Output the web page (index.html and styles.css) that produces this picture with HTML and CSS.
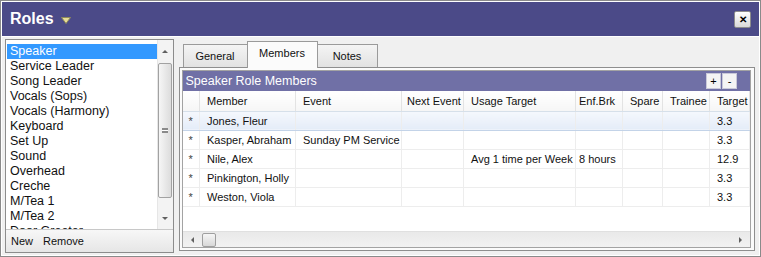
FILE: index.html
```html
<!DOCTYPE html>
<html lang="en">
<head>
    <meta charset="UTF-8">
    <title>Roles</title>
    <link rel="stylesheet" href="styles.css">
</head>
<body>
    <div class="window">
        <div class="titlebar">
            <span class="title">Roles</span>
            <svg class="title-arrow" width="10" height="7" viewBox="0 0 10 7">
                <polygon points="0.5,0.5 9.5,0.5 5,6.5" fill="#e6dc98" stroke="#8f8a5a" stroke-width="1"/>
            </svg>
            <div class="close-btn">&#x2715;</div>
        </div>

        <div class="window-body">
            <div class="roles-pane">
                <div class="role-list">
                    <ul class="role-items">
                        <li class="selected">Speaker</li>
                        <li>Service Leader</li>
                        <li>Song Leader</li>
                        <li>Vocals (Sops)</li>
                        <li>Vocals (Harmony)</li>
                        <li>Keyboard</li>
                        <li>Set Up</li>
                        <li>Sound</li>
                        <li>Overhead</li>
                        <li>Creche</li>
                        <li>M/Tea 1</li>
                        <li>M/Tea 2</li>
                        <li>Door Greeter</li>
                    </ul>
                    <div class="vscroll">
                        <span class="arrow-up"></span>
                        <div class="vthumb"><span class="grip"></span></div>
                        <span class="arrow-down"></span>
                    </div>
                </div>
                <div class="role-actions">
                    <span>New</span>
                    <span>Remove</span>
                </div>
            </div>

            <div class="details-pane">
                <div class="tabs">
                    <div class="tab tab-general">General</div>
                    <div class="tab tab-members active">Members</div>
                    <div class="tab tab-notes">Notes</div>
                </div>
                <div class="tab-panel">
                    <div class="grid">
                        <div class="grid-header">
                            <span>Speaker Role Members</span>
                            <div class="grid-tools">
                                <span class="tool-btn">+</span>
                                <span class="tool-btn">-</span>
                            </div>
                        </div>
                        <table class="members">
                            <colgroup>
                                <col style="width:17px">
                                <col style="width:96px">
                                <col style="width:106px">
                                <col style="width:62px">
                                <col style="width:112px">
                                <col style="width:47px">
                                <col style="width:40px">
                                <col style="width:47px">
                                <col style="width:40px">
                            </colgroup>
                            <thead>
                                <tr>
                                    <th></th>
                                    <th>Member</th>
                                    <th>Event</th>
                                    <th class="tight">Next Event</th>
                                    <th>Usage Target</th>
                                    <th class="narrow">Enf.Brk</th>
                                    <th>Spare</th>
                                    <th>Trainee</th>
                                    <th>Target</th>
                                </tr>
                            </thead>
                            <tbody>
                                <tr class="current">
                                    <td class="star">*</td><td>Jones, Fleur</td><td></td><td></td><td></td><td></td><td></td><td></td><td>3.3</td>
                                </tr>
                                <tr>
                                    <td class="star">*</td><td>Kasper, Abraham</td><td>Sunday PM Service</td><td></td><td></td><td></td><td></td><td></td><td>3.3</td>
                                </tr>
                                <tr>
                                    <td class="star">*</td><td>Nile, Alex</td><td></td><td></td><td>Avg 1 time per Week</td><td class="narrow">8 hours</td><td></td><td></td><td>12.9</td>
                                </tr>
                                <tr>
                                    <td class="star">*</td><td>Pinkington, Holly</td><td></td><td></td><td></td><td></td><td></td><td></td><td>3.3</td>
                                </tr>
                                <tr>
                                    <td class="star">*</td><td>Weston, Viola</td><td></td><td></td><td></td><td></td><td></td><td></td><td>3.3</td>
                                </tr>
                            </tbody>
                        </table>
                        <div class="grid-fill"></div>
                        <div class="hscroll">
                            <span class="arrow-left"></span>
                            <div class="hthumb"></div>
                            <span class="arrow-right"></span>
                        </div>
                    </div>
                </div>
            </div>
        </div>
    </div>
</body>
</html>
```

FILE: styles.css
```css
* {
    margin: 0;
    padding: 0;
    box-sizing: border-box;
}

body {
    font-family: "Liberation Sans", Arial, sans-serif;
    font-size: 11px;
    color: #111;
    background-color: #fff;
}

.window {
    width: 761px;
    height: 257px;
    border: 1px solid #8a8a8a;
    padding: 1px;
    background-color: #fff;
    display: flex;
    flex-direction: column;
}

/* title bar */

.titlebar {
    height: 34px;
    background-color: #4b4a88;
    display: flex;
    align-items: center;
    padding-left: 8px;
    padding-right: 8px;
}

.title {
    color: #fff;
    font-size: 16px;
    font-weight: bold;
}

.title-arrow {
    margin-left: 7px;
    margin-top: 2px;
}

.close-btn {
    margin-left: auto;
    width: 17px;
    height: 17px;
    border: 1px solid #8d8d8d;
    border-radius: 2px;
    background: linear-gradient(#ffffff, #d9d9d9);
    color: #000;
    font-size: 10px;
    font-weight: bold;
    display: flex;
    align-items: center;
    justify-content: center;
}

.window-body {
    flex: 1;
    display: flex;
    background-color: #f0f0f0;
    border-top: 1px solid #fff;
    padding: 2px 3px 2px 3px;
}

/* roles list */

.roles-pane {
    width: 169px;
    border: 1px solid #8c8c8c;
    display: flex;
    flex-direction: column;
    background-color: #f0f0f0;
}

.role-list {
    height: 190px;
    display: flex;
    background-color: #fff;
    border-bottom: 1px solid #c8c8c8;
    overflow: hidden;
}

.role-items {
    flex: 1;
    list-style: none;
    padding: 4px 0 0 1px;
    font-size: 12.5px;
}

.role-items li {
    height: 15px;
    line-height: 15px;
    padding-left: 3px;
    white-space: nowrap;
}

.role-items li.selected {
    background-color: #3399ff;
    color: #fff;
}

.vscroll {
    width: 16px;
    background-color: #f3f3f3;
    border-left: 1px solid #e6e6e6;
    display: flex;
    flex-direction: column;
    align-items: center;
    padding-top: 10px;
}

.arrow-up {
    width: 0;
    height: 0;
    border-left: 3px solid transparent;
    border-right: 3px solid transparent;
    border-bottom: 3px solid #606060;
}

.vthumb {
    width: 14px;
    height: 135px;
    margin-top: 10px;
    border: 1px solid #a2a2a2;
    border-radius: 2px;
    background: linear-gradient(90deg, #f6f6f6, #dcdcdc);
    display: flex;
    align-items: center;
    justify-content: center;
}

.grip {
    width: 6px;
    height: 5px;
    border-top: 1px solid #8a8a8a;
    border-bottom: 1px solid #8a8a8a;
    background: linear-gradient(#fff 1px, #8a8a8a 1px, #8a8a8a 2px, #fff 2px);
    background-size: 6px 2px;
    background-position: 0 1px;
}

.arrow-down {
    width: 0;
    height: 0;
    margin-top: 19px;
    border-left: 3px solid transparent;
    border-right: 3px solid transparent;
    border-top: 3px solid #606060;
}

.role-actions {
    flex: 1;
    display: flex;
    align-items: center;
    gap: 10px;
    padding-left: 5px;
    background: linear-gradient(#f7f7f7, #e6e6e6);
}

/* details */

.details-pane {
    flex: 1;
    margin-left: 5px;
    margin-top: 2px;
    margin-bottom: 2px;
    margin-right: 1px;
    display: flex;
    flex-direction: column;
}

.tabs {
    height: 26px;
    display: flex;
    align-items: flex-end;
    padding-left: 4px;
}

.tab {
    height: 23px;
    border: 1px solid #9a9a9a;
    border-bottom: none;
    background: linear-gradient(#f4f4f4, #e2e2e2);
    display: flex;
    align-items: center;
    justify-content: center;
}

.tab-general {
    width: 65px;
}

.tab-members {
    width: 71px;
    margin-left: -1px;
}

.tab-notes {
    width: 61px;
    margin-left: -1px;
}

.tab.active {
    height: 27px;
    margin-bottom: -1px;
    background: #fbfbfb;
    padding-bottom: 4px;
    position: relative;
    z-index: 1;
}

.tab-panel {
    flex: 1;
    border: 1px solid #8e8e8e;
    background-color: #fbfbfb;
    padding: 2px;
    display: flex;
}

.grid {
    flex: 1;
    border: 1px solid #a3a3a3;
    background-color: #fff;
    display: flex;
    flex-direction: column;
    margin-right: 1px;
}

.grid-header {
    height: 20px;
    background-color: #7070a6;
    color: #fff;
    font-size: 12.5px;
    display: flex;
    align-items: center;
    padding-left: 3px;
}

.grid-tools {
    margin-left: auto;
    margin-right: 13px;
    display: flex;
    gap: 1px;
}

.tool-btn {
    width: 15px;
    height: 16px;
    background-color: #f4f4f4;
    border: 1px solid #c9c9d9;
    color: #000;
    font-size: 11px;
    display: flex;
    align-items: center;
    justify-content: center;
}

.members {
    table-layout: fixed;
    border-collapse: collapse;
    width: 567px;
}

.members th,
.members td {
    height: 19px;
    padding: 0 0 0 7px;
    text-align: left;
    font-weight: normal;
    white-space: nowrap;
    overflow: hidden;
    border-right: 1px solid #ededed;
    border-bottom: 1px solid #ededed;
}

.members th {
    height: 20px;
    background: linear-gradient(#ffffff, #f6f6f6);
    border-right: 1px solid #e3e3e3;
    border-bottom: 1px solid #d6e0ea;
}

.members .narrow {
    padding-left: 3px;
}

.members .tight {
    padding-left: 5px;
}

.members td.star {
    padding: 0;
    text-align: center;
    color: #444;
}

.members tr.current td {
    background: linear-gradient(#f5f8fd, #e4ecf8);
    border-top: 1px solid #c3d3e8;
    border-bottom: 1px solid #c3d3e8;
}

.grid-fill {
    flex: 1;
}

.hscroll {
    height: 16px;
    background: linear-gradient(#e9e9e9, #f2f2f2);
    border-top: 1px solid #e0e0e0;
    display: flex;
    align-items: center;
    padding-left: 8px;
    padding-right: 8px;
}

.arrow-left {
    width: 0;
    height: 0;
    border-top: 3px solid transparent;
    border-bottom: 3px solid transparent;
    border-right: 3px solid #606060;
}

.hthumb {
    width: 14px;
    height: 14px;
    margin-left: 8px;
    border: 1px solid #9f9f9f;
    border-radius: 2px;
    background: linear-gradient(#f6f6f6, #d8d8d8);
}

.arrow-right {
    margin-left: auto;
    width: 0;
    height: 0;
    border-top: 3px solid transparent;
    border-bottom: 3px solid transparent;
    border-left: 3px solid #606060;
}
```
